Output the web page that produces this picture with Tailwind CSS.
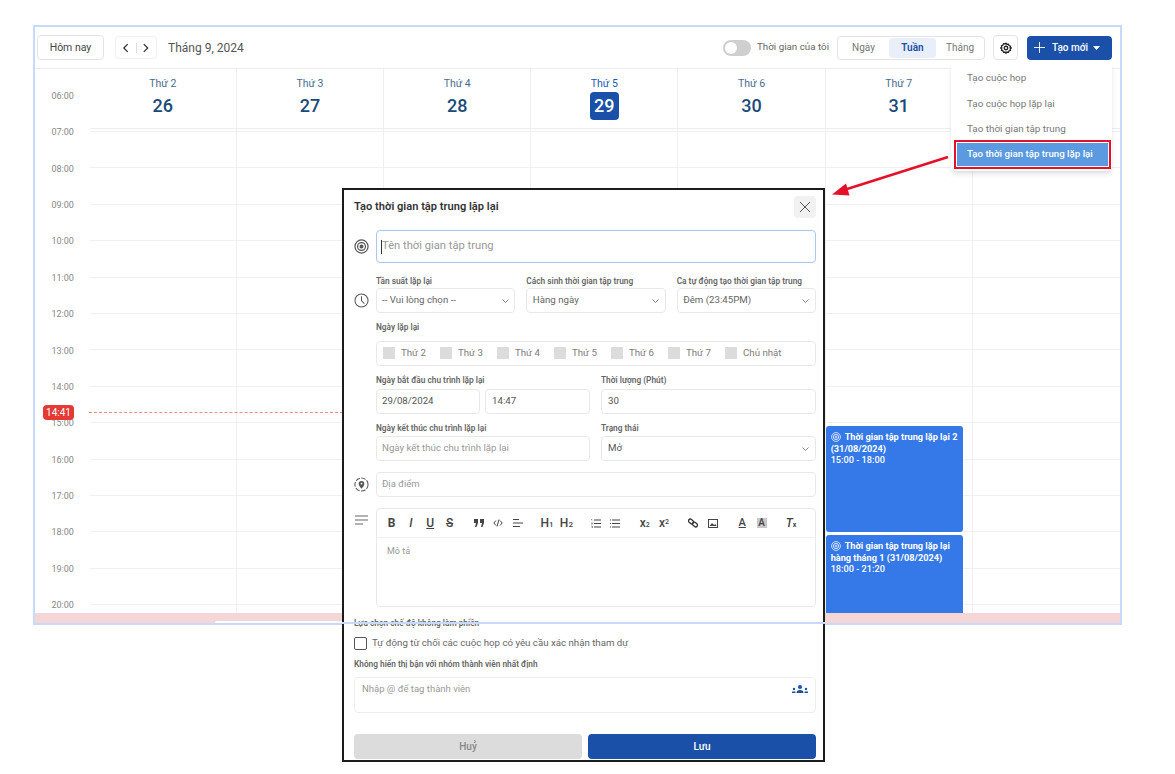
<!DOCTYPE html>
<html lang="vi">
<head>
    <meta charset="UTF-8">
    <title>Tạo thời gian tập trung lặp lại</title>
    <script src="https://cdn.jsdelivr.net/npm/@tailwindcss/browser@4"></script>
</head>
<body class="bg-white font-['Roboto',sans-serif]">
<div class="relative w-[1175px] h-[774px] overflow-hidden bg-white">

    <!-- calendar -->
    <div class="relative ml-[33px] mt-[25px] w-[1089px] h-[599.5px] border-2 border-[#c9d9fb] overflow-hidden">
        <div class="flex items-center h-[42px] border-b border-[#eeeeee] pl-[2px] pr-[8px]">
            <button class="w-[67px] h-[25px] border border-[#e4e4e4] rounded text-[10.5px] text-[#444]">Hôm nay</button>
            <div class="flex items-center ml-[11px] w-[42px] h-[23px] border border-[#f0f0f0] rounded">
                <svg class="w-[20px] h-[10px]" viewBox="0 0 20 10" fill="none" stroke="#333" stroke-width="1.3"><path d="M12 1 8 5l4 4"/></svg>
                <div class="w-px h-[10px] bg-[#ddd]"></div>
                <svg class="w-[20px] h-[10px]" viewBox="0 0 20 10" fill="none" stroke="#333" stroke-width="1.3"><path d="m8 1 4 4-4 4"/></svg>
            </div>
            <div class="ml-[11px] text-[12px] text-[#555]">Tháng 9, 2024</div>

            <div class="ml-auto flex items-center">
                <div class="w-[28px] h-[16px] rounded-full bg-[#cfcfcf] p-[2px]"><div class="w-[12px] h-[12px] rounded-full bg-white"></div></div>
                <span class="ml-[6px] text-[9.8px] text-[#666] w-[80px] whitespace-nowrap">Thời gian của tôi</span>
                <div class="flex items-center w-[148px] h-[24px] border border-[#e4e4e4] rounded text-[10px] text-[#777]">
                    <span class="w-[51px] text-center">Ngày</span>
                    <span class="w-[47px] h-[20px] leading-[20px] text-center rounded bg-[#e8eefa] font-semibold text-[#1a50a8]">Tuần</span>
                    <span class="w-[48px] text-center">Tháng</span>
                </div>
                <div class="flex items-center justify-center ml-[8px] w-[25px] h-[25px] border border-[#e4e4e4] rounded">
                    <svg class="w-[12px] h-[12px]" viewBox="0 0 24 24" fill="none" stroke="#222" stroke-width="2.6"><path d="M12 2.5l2 2.4 3-.6 1 2.9 2.9 1-.6 3L22.5 12l-2.2 1.8.6 3-2.9 1-1 2.9-3-.6-2 2.4-2-2.4-3 .6-1-2.9-2.9-1 .6-3L1.5 12l2.2-1.8-.6-3 2.9-1 1-2.9 3 .6z"/><circle cx="12" cy="12" r="3.5"/></svg>
                </div>
                <button class="flex items-center ml-[9px] w-[85px] h-[24px] rounded bg-[#1a50a8] text-white text-[10px] font-medium pl-[7px]">
                    <svg class="w-[11px] h-[11px]" viewBox="0 0 11 11" stroke="#fff" stroke-width="0.9"><path d="M5.5 0v11M0 5.500h11"/></svg>
                    <span class="ml-[7px]">Tạo mới</span>
                    <svg class="ml-[5px] w-[7px] h-[4px]" viewBox="0 0 7 4" fill="#fff"><path d="M0 0h7L3.500 4z"/></svg>
                </button>
            </div>
        </div>

        <div class="flex">
            <div class="w-[54.7px] shrink-0 pt-[8.8px] pl-[16.500px] text-[9px] text-[#888]">
                <div class="h-[36.4px] leading-[36.4px]">06:00</div>
                <div class="h-[36.4px] leading-[36.4px]">07:00</div>
                <div class="h-[36.4px] leading-[36.4px]">08:00</div>
                <div class="h-[36.4px] leading-[36.4px]">09:00</div>
                <div class="h-[36.4px] leading-[36.4px]">10:00</div>
                <div class="h-[36.4px] leading-[36.4px]">11:00</div>
                <div class="h-[36.4px] leading-[36.4px]">12:00</div>
                <div class="h-[36.4px] leading-[36.4px]">13:00</div>
                <div class="h-[36.4px] leading-[36.4px]">14:00</div>
                <div class="h-[36.4px] leading-[36.4px]">15:00</div>
                <div class="h-[36.4px] leading-[36.4px]">16:00</div>
                <div class="h-[36.4px] leading-[36.4px]">17:00</div>
                <div class="h-[36.4px] leading-[36.4px]">18:00</div>
                <div class="h-[36.4px] leading-[36.4px]">19:00</div>
                <div class="h-[36.4px] leading-[36.4px]">20:00</div>
            </div>

            <div class="flex-1">
                <div class="grid grid-cols-7 h-[60px] border-b border-[#eeeeee] divide-x divide-[#eeeeee] text-[10.5px] text-[#4a6d92]">
                    <div class="flex flex-col items-center pt-[8px]"><span class="leading-[14px]">Thứ 2</span><span class="mt-[1px] leading-[28px] text-[18px] font-medium text-[#1b4a78]">26</span></div>
                    <div class="flex flex-col items-center pt-[8px]"><span class="leading-[14px]">Thứ 3</span><span class="mt-[1px] leading-[28px] text-[18px] font-medium text-[#1b4a78]">27</span></div>
                    <div class="flex flex-col items-center pt-[8px]"><span class="leading-[14px]">Thứ 4</span><span class="mt-[1px] leading-[28px] text-[18px] font-medium text-[#1b4a78]">28</span></div>
                    <div class="flex flex-col items-center pt-[8px]"><span class="leading-[14px] text-[#1a5ab4]">Thứ 5</span><span class="mt-[1px] w-[29px] text-center rounded-sm bg-[#1a50a8] leading-[28px] text-[18px] font-medium text-white">29</span></div>
                    <div class="flex flex-col items-center pt-[8px]"><span class="leading-[14px]">Thứ 6</span><span class="mt-[1px] leading-[28px] text-[18px] font-medium text-[#1b4a78]">30</span></div>
                    <div class="flex flex-col items-center pt-[8px]"><span class="leading-[14px]">Thứ 7</span><span class="mt-[1px] leading-[28px] text-[18px] font-medium text-[#1b4a78]">31</span></div>
                    <div></div>
                </div>
                <div class="relative pt-[2px]">
                    <div class="h-[36.4px] border-t border-[#f0f0f0]"></div>
                    <div class="h-[36.4px] border-t border-[#f0f0f0]"></div>
                    <div class="h-[36.4px] border-t border-[#f0f0f0]"></div>
                    <div class="h-[36.4px] border-t border-[#f0f0f0]"></div>
                    <div class="h-[36.4px] border-t border-[#f0f0f0]"></div>
                    <div class="h-[36.4px] border-t border-[#f0f0f0]"></div>
                    <div class="h-[36.4px] border-t border-[#f0f0f0]"></div>
                    <div class="h-[36.4px] border-t border-[#f0f0f0]"></div>
                    <div class="h-[36.4px] border-t border-[#f0f0f0]"></div>
                    <div class="h-[36.4px] border-t border-[#f0f0f0]"></div>
                    <div class="h-[36.4px] border-t border-[#f0f0f0]"></div>
                    <div class="h-[36.4px] border-t border-[#f0f0f0]"></div>
                    <div class="h-[36.4px] border-t border-[#f0f0f0]"></div>
                    <div class="h-[36.4px] border-t border-[#f0f0f0]"></div>

                    <div class="absolute inset-0 grid grid-cols-7 divide-x divide-[#f0f0f0]">
                        <div></div><div></div><div></div><div></div><div></div>
                        <div class="pt-[297px] text-white text-[9.2px] leading-[11.7px]">
                            <div class="w-[137px] h-[106px] rounded-[3px] bg-[#3578e8] px-[5px] pt-[4.500px]">
                                <div class="font-bold"><svg class="inline-block w-[10px] h-[10px] mr-[4px] mb-[1px]" viewBox="0 0 12 12" fill="none" stroke="#fff" stroke-width="0.9"><circle cx="6" cy="6" r="5.300"/><circle cx="6" cy="6" r="3.200"/><circle cx="6" cy="6" r="1.200"/></svg>Thời gian tập trung lặp lại 2 (31/08/2024)</div>
                                <div class="font-medium">15:00 - 18:00</div>
                            </div>
                            <div class="mt-[3px] w-[137px] h-[106px] rounded-[3px] bg-[#3578e8] px-[5px] pt-[4.500px]">
                                <div class="font-bold"><svg class="inline-block w-[10px] h-[10px] mr-[4px] mb-[1px]" viewBox="0 0 12 12" fill="none" stroke="#fff" stroke-width="0.9"><circle cx="6" cy="6" r="5.300"/><circle cx="6" cy="6" r="3.200"/><circle cx="6" cy="6" r="1.200"/></svg>Thời gian tập trung lặp lại hàng tháng 1 (31/08/2024)</div>
                                <div class="font-medium">18:00 - 21:20</div>
                            </div>
                        </div>
                        <div></div>
                    </div>
                </div>
            </div>
        </div>

        <!-- current time -->
        <div class="absolute left-[8px] top-[378px] w-[31px] h-[15px] rounded-sm bg-[#e53935] text-white text-[10px] leading-[15px] text-center">14:41</div>
        <div class="absolute left-[54px] top-[385px] w-[500px] border-t border-dashed border-[#f28b8b]"></div>
        <!-- strip at the bottom -->
        <div class="absolute left-0 right-0 bottom-0 h-[10px] bg-[#f5d6d6]"></div>
        <div class="absolute left-[180px] bottom-0 w-[200px] h-[2px] rounded-t bg-white"></div>
    </div>

    <!-- dropdown -->
    <div class="absolute left-[951px] top-[62px] w-[161px] h-[109px] bg-white rounded-sm shadow-md text-[9.9px] text-[#777] pl-[16px] pt-[8px]">
        <div class="h-[25.500px] leading-[15px]">Tạo cuộc họp</div>
        <div class="h-[25.500px] leading-[15px]">Tạo cuộc họp lặp lại</div>
        <div class="h-[25.500px] leading-[15px]">Tạo thời gian tập trung</div>
    </div>
    <div class="absolute left-[954px] top-[140px] w-[157px] h-[29px] border-2 border-[#e5112b] p-px">
        <div class="h-full bg-[#5b9ae0] text-white text-[9.7px] font-medium leading-[22px] pl-[10px] whitespace-nowrap">Tạo thời gian tập trung lặp lại</div>
    </div>

    <!-- arrow -->
    <svg class="absolute left-[826px] top-[150px] w-[126px] h-[50px]" viewBox="0 0 126 50">
        <path d="M122 7 18 40" stroke="#e5112b" stroke-width="2.600" fill="none"/>
        <path d="M6 44.500 20 33.500l3.500 12z" fill="#e5112b"/>
    </svg>

    <!-- modal -->
    <div class="absolute left-[342px] top-[188px] w-[483px] h-[574px] border-2 border-[#1c1c1c] bg-white pl-[10px] pr-[7px]">
        <div class="flex items-center justify-between h-[34px]">
            <div class="text-[11.1px] font-semibold text-[#333]">Tạo thời gian tập trung lặp lại</div>
            <div class="flex items-center justify-center w-[22px] h-[22px] rounded bg-[#f1f1f1]">
                <svg class="w-[10px] h-[10px]" viewBox="0 0 10 10" stroke="#555" stroke-width="1"><path d="m0 0 10 10M10 0 0 10"/></svg>
            </div>
        </div>

        <div class="flex">
            <div class="w-[22px] shrink-0 flex flex-col text-[#555]">
                <svg class="mt-[15px] w-[15px] h-[15px]" viewBox="0 0 16 16" fill="none" stroke="#555" stroke-width="1.300"><circle cx="8" cy="8" r="7"/><circle cx="8" cy="8" r="4.200"/><circle cx="8" cy="8" r="1.500" fill="#555"/></svg>
                <svg class="mt-[39px] w-[15px] h-[15px]" viewBox="0 0 16 16" fill="none" stroke="#555" stroke-width="1.100"><circle cx="8" cy="8" r="7"/><path d="M8 3.500V8l3 3.500"/></svg>
                <svg class="mt-[169px] w-[15px] h-[15px]" viewBox="0 0 16 16" fill="none" stroke="#555" stroke-width="1.100"><circle cx="8" cy="8" r="7" stroke-dasharray="5 1.500"/><path d="M8 12.500C6 10 5 8.700 5 7.200a3 3 0 0 1 6 0c0 1.500-1 2.800-3 5.300z" fill="#555" stroke="none"/><circle cx="8" cy="7" r="1" fill="#fff" stroke="none"/></svg>
                <svg class="mt-[23px] w-[15px] h-[11px]" viewBox="0 0 15 11" stroke="#666" stroke-width="1.100"><path d="M1 1h13M1 5h13M1 9h8"/></svg>
            </div>
            <div class="flex-1">
                <div class="flex items-center h-[33px] mt-[6px] border border-[#a8c8f0] rounded pl-[4px] text-[11.2px] text-[#999]"><span class="w-px h-[14px] bg-[#333]"></span><span>Tên thời gian tập trung</span></div>

                <div class="grid grid-cols-3 gap-x-[11px] mt-[12px] text-[8.3px] font-semibold text-[#666]">
                    <div><div class="h-[13px] leading-[13px]">Tần suất lặp lại</div>
                        <div class="flex items-center justify-between h-[25px] border border-[#e8e8e8] rounded px-[5px] text-[9.7px] font-normal text-[#666]">-- Vui lòng chọn --<svg class="w-[7px] h-[4px]" viewBox="0 0 7 4" fill="none" stroke="#666" stroke-width="0.8"><path d="m.5.5 3 3 3-3"/></svg></div></div>
                    <div><div class="h-[13px] leading-[13px] whitespace-nowrap">Cách sinh thời gian tập trung</div>
                        <div class="flex items-center justify-between h-[25px] border border-[#e8e8e8] rounded px-[5.500px] text-[9.7px] font-normal text-[#666]">Hàng ngày<svg class="w-[7px] h-[4px]" viewBox="0 0 7 4" fill="none" stroke="#666" stroke-width="0.8"><path d="m.5.5 3 3 3-3"/></svg></div></div>
                    <div><div class="h-[13px] leading-[13px] whitespace-nowrap">Ca tự động tạo thời gian tập trung</div>
                        <div class="flex items-center justify-between h-[25px] border border-[#e8e8e8] rounded px-[5.500px] text-[9.7px] font-normal text-[#666]">Đêm (23:45PM)<svg class="w-[7px] h-[4px]" viewBox="0 0 7 4" fill="none" stroke="#666" stroke-width="0.8"><path d="m.5.5 3 3 3-3"/></svg></div></div>
                </div>

                <div class="mt-[8px] h-[13px] leading-[13px] text-[8.3px] font-semibold text-[#666]">Ngày lặp lại</div>
                <div class="flex items-center h-[25px] mt-[7px] border border-[#e8e8e8] rounded pl-[6px] text-[9.7px] text-[#7b7b7b]">
                    <div class="flex items-center w-[57px]"><span class="w-[12px] h-[12px] bg-[#dcdcdc] mr-[6px]"></span>Thứ 2</div>
                    <div class="flex items-center w-[57px]"><span class="w-[12px] h-[12px] bg-[#dcdcdc] mr-[6px]"></span>Thứ 3</div>
                    <div class="flex items-center w-[57px]"><span class="w-[12px] h-[12px] bg-[#dcdcdc] mr-[6px]"></span>Thứ 4</div>
                    <div class="flex items-center w-[57px]"><span class="w-[12px] h-[12px] bg-[#dcdcdc] mr-[6px]"></span>Thứ 5</div>
                    <div class="flex items-center w-[57px]"><span class="w-[12px] h-[12px] bg-[#dcdcdc] mr-[6px]"></span>Thứ 6</div>
                    <div class="flex items-center w-[57px]"><span class="w-[12px] h-[12px] bg-[#dcdcdc] mr-[6px]"></span>Thứ 7</div>
                    <div class="flex items-center"><span class="w-[12px] h-[12px] bg-[#dcdcdc] mr-[6px]"></span>Chủ nhật</div>
                </div>

                <div class="grid grid-cols-[214px_1fr] gap-x-[11px] mt-[8px] text-[8.3px] font-semibold text-[#666]">
                    <div><div class="h-[15px] leading-[13px]">Ngày bắt đầu chu trình lặp lại</div>
                        <div class="flex gap-[5px] text-[9.7px] font-normal text-[#555]">
                            <div class="flex items-center w-[104px] h-[25px] border border-[#e8e8e8] rounded px-[5px]">29/08/2024</div>
                            <div class="flex items-center w-[105px] h-[25px] border border-[#e8e8e8] rounded px-[6px]">14:47</div>
                        </div></div>
                    <div><div class="h-[15px] leading-[13px]">Thời lượng (Phút)</div>
                        <div class="flex items-center h-[25px] border border-[#e8e8e8] rounded px-[6px] text-[9.7px] font-normal text-[#555]">30</div></div>
                </div>
                <div class="grid grid-cols-[214px_1fr] gap-x-[11px] mt-[8px] text-[8.3px] font-semibold text-[#666]">
                    <div><div class="h-[14px] leading-[13px]">Ngày kết thúc chu trình lặp lại</div>
                        <div class="flex items-center h-[25px] border border-[#e8e8e8] rounded px-[5px] text-[9.7px] font-normal text-[#999]">Ngày kết thúc chu trình lặp lại</div></div>
                    <div><div class="h-[14px] leading-[13px]">Trạng thái</div>
                        <div class="flex items-center justify-between h-[25px] border border-[#e8e8e8] rounded px-[6px] text-[9.7px] font-normal text-[#555]">Mở<svg class="w-[7px] h-[4px]" viewBox="0 0 7 4" fill="none" stroke="#666" stroke-width="0.8"><path d="m.5.5 3 3 3-3"/></svg></div></div>
                </div>

                <div class="flex items-center h-[25px] mt-[11px] border border-[#e8e8e8] rounded px-[5px] text-[9.5px] text-[#999]">Địa điểm</div>

                <div class="mt-[11px] h-[99px] border border-[#e8e8e8] rounded">
                    <div class="flex items-center h-[29px] border-b border-[#f0f0f0] pl-[5px] text-[12px] text-[#444]">
                        <div class="flex gap-0">
                            <span class="w-[19.300px] text-center font-bold">B</span>
                            <span class="w-[19.300px] text-center italic font-medium">I</span>
                            <span class="w-[19.300px] text-center underline font-medium">U</span>
                            <span class="w-[19.300px] text-center line-through font-medium">S</span>
                        </div>
                        <div class="flex items-center ml-[10.200px]">
                            <span class="w-[19.300px] flex justify-center"><svg class="w-[10px] h-[8px]" viewBox="0 0 10 8" fill="#444"><path d="M0 0h4v4L2.500 8H1l1-4H0zM6 0h4v4L8.500 8H7l1-4H6z"/></svg></span>
                            <span class="w-[19.300px] flex justify-center"><svg class="w-[10px] h-[8px]" viewBox="0 0 10 8" fill="none" stroke="#444" stroke-width="1"><path d="M3 1.500.8 4 3 6.500M7 1.500 9.200 4 7 6.500M6 .5 4 7.500"/></svg></span>
                            <span class="w-[19.300px] flex justify-center"><svg class="w-[10px] h-[8px]" viewBox="0 0 10 8" fill="none" stroke="#444" stroke-width="1"><path d="M0 .5h6M0 4h10M0 7.500h7"/></svg></span>
                        </div>
                        <div class="flex ml-[10.200px] font-medium">
                            <span class="w-[19.300px] text-center">H<sub class="text-[8px] bottom-0">1</sub></span>
                            <span class="w-[19.300px] text-center">H<sub class="text-[8px] bottom-0">2</sub></span>
                        </div>
                        <div class="flex items-center ml-[10.200px]">
                            <span class="w-[19.300px] flex justify-center"><svg class="w-[10px] h-[9px]" viewBox="0 0 10 9" fill="none" stroke="#444" stroke-width="1"><path d="M3 1h7M3 4.500h7M3 8h7"/><path d="M0 .5h1v1M0 4h1.500v1H0M0 7h1.500v2H0" stroke-width="0.500"/></svg></span>
                            <span class="w-[19.300px] flex justify-center"><svg class="w-[10px] h-[9px]" viewBox="0 0 10 9" fill="none" stroke="#444" stroke-width="1"><path d="M2 1h8M2 4.500h8M2 8h8M0 1h1M0 4.500h1M0 8h1"/></svg></span>
                        </div>
                        <div class="flex ml-[10.200px] font-medium">
                            <span class="w-[19.300px] text-center">x<sub class="text-[7px] bottom-0">2</sub></span>
                            <span class="w-[19.300px] text-center">x<sup class="text-[7px] top-[-3px]">2</sup></span>
                        </div>
                        <div class="flex items-center ml-[10.200px]">
                            <span class="w-[19.300px] flex justify-center"><svg class="w-[10px] h-[10px]" viewBox="0 0 10 10" fill="none" stroke="#333" stroke-width="1.300"><rect x="0.300" y="1.700" width="5.500" height="3.600" rx="1.800" transform="rotate(40 3 3.500)"/><rect x="4.200" y="4.700" width="5.500" height="3.600" rx="1.800" transform="rotate(40 7 6.500)"/></svg></span>
                            <span class="w-[19.300px] flex justify-center"><svg class="w-[10px] h-[9px]" viewBox="0 0 10 9"><rect x=".5" y=".5" width="9" height="8" fill="none" stroke="#444"/><path d="M1.500 7 4 4l2 2 1.500-1L8.500 7z" fill="#444"/></svg></span>
                        </div>
                        <div class="flex items-center ml-[10.200px]">
                            <span class="w-[19.300px] text-center text-[11px] font-medium underline decoration-[#444]">A</span>
                            <span class="w-[19.300px] flex justify-center"><span class="w-[10px] h-[10px] bg-[#c8c8c8] text-[10px] leading-[10px] text-center font-medium">A</span></span>
                        </div>
                        <div class="ml-[10.200px]">
                            <span class="block w-[19.300px] text-center italic font-medium">T<sub class="text-[7px] bottom-0 not-italic font-bold">x</sub></span>
                        </div>
                    </div>
                    <div class="pl-[10px] pt-[7px] text-[9px] text-[#999]">Mô tả</div>
                </div>
            </div>
        </div>

        <div class="mt-[10px] h-[13px] leading-[13px] text-[8.3px] font-semibold text-[#666]">Lựa chọn chế độ không làm phiền</div>
        <div class="flex items-center mt-[6px] h-[14px] text-[9.7px] text-[#666]">
            <span class="w-[13px] h-[13px] border border-[#555] rounded-[2px] mr-[5px]"></span>Tự động từ chối các cuộc họp có yêu cầu xác nhận tham dự
        </div>
        <div class="mt-[8px] h-[13px] leading-[13px] text-[8.3px] font-semibold text-[#666]">Không hiển thị bận với nhóm thành viên nhất định</div>
        <div class="flex justify-between h-[36px] mt-[6px] border border-[#eeeeee] rounded px-[7px] pt-[4px] text-[9.5px] text-[#999]">
            <span>Nhập @ để tag thành viên</span>
            <svg class="w-[16px] h-[9px] mt-[3px]" viewBox="0 0 16 9" fill="#1a50a8"><circle cx="8" cy="2" r="2"/><path d="M4.500 8a3.500 3 0 0 1 7 0z"/><circle cx="2" cy="4" r="1.200"/><path d="M0 8h3.500V6.500H0z"/><circle cx="14" cy="4" r="1.200"/><path d="M12.500 8H16V6.500h-3.500z"/></svg>
        </div>
        <div class="grid grid-cols-2 gap-x-[6px] mt-[21px]">
            <button class="h-[25px] rounded bg-[#dcdcdc] text-[10px] font-medium text-[#888]">Huỷ</button>
            <button class="h-[25px] rounded bg-[#1a50a8] text-[10px] font-medium text-white">Lưu</button>
        </div>
    </div>

    <!-- bottom edge of the calendar frame runs across the modal -->
    <div class="absolute left-[342px] top-[622px] w-[483px] h-[2px] bg-[#c9d9fb]"></div>
</div>
</body>
</html>
